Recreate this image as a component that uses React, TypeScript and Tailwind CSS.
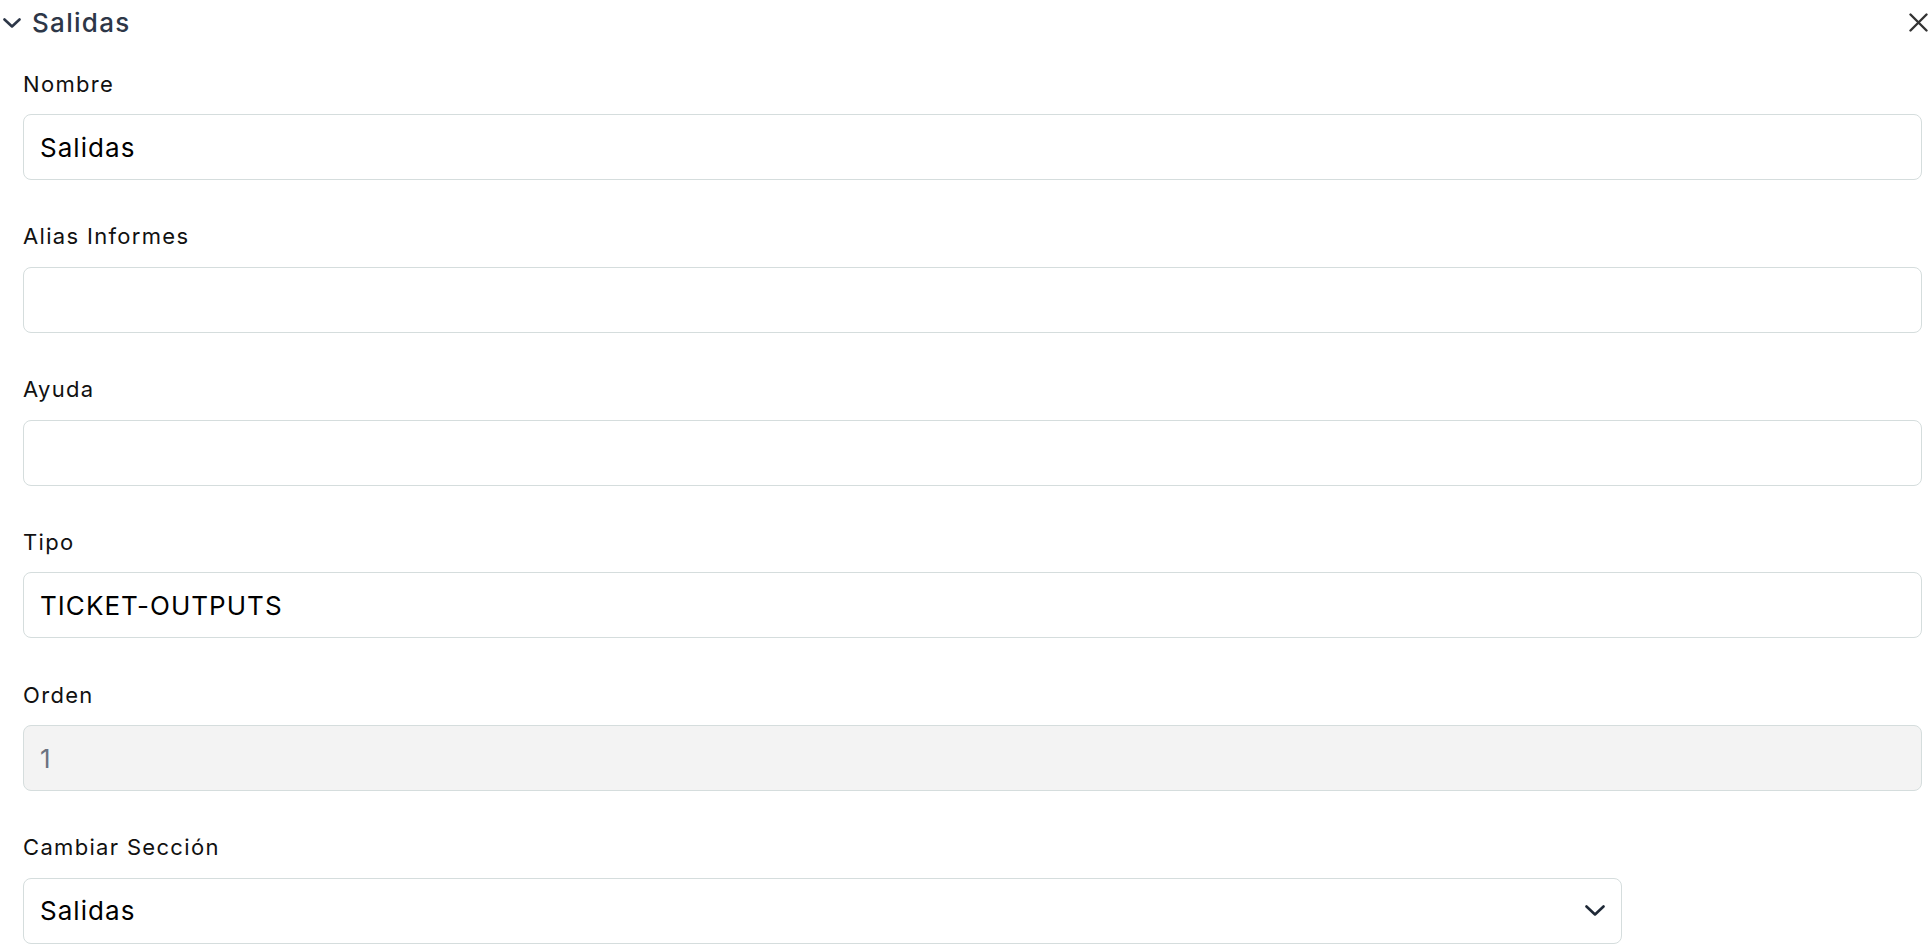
import React from 'react'

interface FieldProps {
  label: string
  value?: string
  disabled?: boolean
}

function Field({ label, value = '', disabled = false }: FieldProps) {
  return (
    <div className="flex flex-col">
      <label className="text-[22px] leading-[32px] tracking-[0.06em] text-[#111111] mb-[14.5px]">{label}</label>
      <input
        readOnly
        disabled={disabled}
        defaultValue={value}
        className={`h-[66px] w-full rounded-[8px] border border-[#d5dddd] px-[16px] text-[26px] tracking-[0.04em] outline-none ${
          disabled ? 'bg-[#f3f3f3] text-[#6b7280]' : 'bg-white text-black'
        }`}
      />
    </div>
  )
}

export default function App() {
  return (
    <div className="w-[1930px] h-[946px] overflow-hidden bg-white font-['Inter','Liberation_Sans',sans-serif]">
      {/* Header */}
      <div className="flex h-[44px] items-center justify-between pl-[3px] pr-[2px]">
        <div className="flex items-center gap-[11px]">
          <svg width="18" height="10" viewBox="0 0 18 10" fill="none" className="mt-[1px]">
            <path d="M1.5 1.5 9 8.5 16.5 1.5" stroke="#2d3748" strokeWidth="2.6" strokeLinecap="round" strokeLinejoin="round" />
          </svg>
          <span className="text-[26px] font-medium tracking-[0.05em] text-[#2d3748]">Salidas</span>
        </div>
        <svg width="19" height="19" viewBox="0 0 19 19" fill="none">
          <path d="M1.5 1.5 17.5 17.5M17.5 1.5 1.5 17.5" stroke="#333333" strokeWidth="2.4" strokeLinecap="round" />
        </svg>
      </div>

      {/* Form */}
      <div className="mt-[23.5px] flex flex-col gap-[40.3px] pl-[23px] pr-[8px]">
        <Field label="Nombre" value="Salidas" />
        <Field label="Alias Informes" />
        <Field label="Ayuda" />
        <Field label="Tipo" value="TICKET-OUTPUTS" />
        <Field label="Orden" value="1" disabled />

        <div className="flex flex-col">
          <label className="text-[22px] leading-[32px] tracking-[0.06em] text-[#111111] mb-[14.5px]">Cambiar Sección</label>
          <div className="flex h-[66px] w-[1599px] items-center justify-between rounded-[8px] border border-[#d5dddd] bg-white pl-[16px] pr-[16px]">
            <span className="text-[26px] tracking-[0.04em] text-black">Salidas</span>
            <svg width="20" height="11" viewBox="0 0 20 11" fill="none">
              <path d="M1.5 1.5 10 9.5 18.5 1.5" stroke="#1f2937" strokeWidth="2.6" strokeLinecap="round" strokeLinejoin="round" />
            </svg>
          </div>
        </div>
      </div>
    </div>
  )
}
